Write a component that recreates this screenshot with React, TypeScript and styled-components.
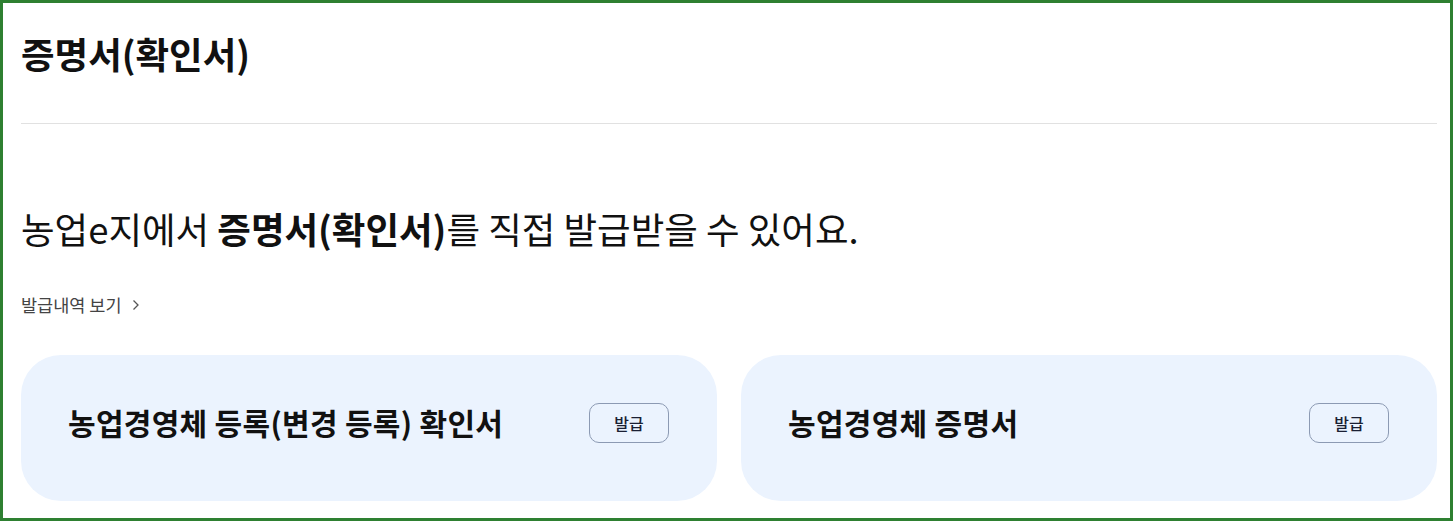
import styled, { createGlobalStyle } from 'styled-components';

const GlobalStyle = createGlobalStyle`
  html, body {
    margin: 0;
    padding: 0;
    background: #fff;
  }
  * {
    box-sizing: border-box;
  }
  body {
    font-family: 'Noto Sans CJK KR', 'Noto Sans', sans-serif;
    color: #111;
  }
`;

const Frame = styled.div`
  width: 1453px;
  height: 521px;
  border: 3px solid #2e8031;
  padding: 0 13px 0 18px;
  overflow: hidden;
`;

const PageHeader = styled.header`
  padding-top: 25px;
  padding-bottom: 43px;
  border-bottom: 1px solid #e1e1e1;
`;

const PageTitle = styled.h1`
  margin: 0;
  font-size: 36.5px;
  line-height: 52px;
  font-weight: 700;
`;

const Intro = styled.p`
  margin: 79px 0 0;
  font-size: 36.5px;
  line-height: 52px;
  font-weight: 400;

  strong {
    font-weight: 700;
  }
`;

const HistoryLink = styled.a`
  display: flex;
  align-items: center;
  gap: 10px;
  width: max-content;
  margin-top: 38px;
  font-size: 17.5px;
  line-height: 24px;
  color: #444;
  text-decoration: none;
  cursor: pointer;
`;

const CardGrid = styled.div`
  display: grid;
  grid-template-columns: 1fr 1fr;
  gap: 24px;
  margin-top: 38px;
`;

const Card = styled.div`
  height: 146px;
  border-radius: 40px;
  background: #ebf3fe;
  display: flex;
  align-items: center;
  justify-content: space-between;
  padding: 0 48px 10px 47px;
`;

const CardTitle = styled.h2`
  margin: 0 0 3px;
  font-size: 30px;
  font-weight: 700;
  letter-spacing: 0.3px;
`;

const IssueButton = styled.button`
  width: 80px;
  height: 40px;
  border: 1px solid #8c9ab3;
  border-radius: 10px;
  background: transparent;
  font-family: inherit;
  font-size: 16px;
  font-weight: 500;
  color: #1a1f33;
  cursor: pointer;
`;

const Chevron = () => (
  <svg width="8" height="12" viewBox="0 0 8 12" fill="none">
    <path d="M1.5 1.5L6 6L1.5 10.5" stroke="#555" strokeWidth="1.3" />
  </svg>
);

const certificates = ['농업경영체 등록(변경 등록) 확인서', '농업경영체 증명서'];

const App = () => {
  return (
    <>
      <GlobalStyle />
      <Frame>
        <PageHeader>
          <PageTitle>증명서(확인서)</PageTitle>
        </PageHeader>
        <Intro>
          농업e지에서 <strong>증명서(확인서)</strong>를 직접 발급받을 수 있어요.
        </Intro>
        <HistoryLink>
          발급내역 보기 <Chevron />
        </HistoryLink>
        <CardGrid>
          {certificates.map((name) => (
            <Card key={name}>
              <CardTitle>{name}</CardTitle>
              <IssueButton>발급</IssueButton>
            </Card>
          ))}
        </CardGrid>
      </Frame>
    </>
  );
};

export default App;
